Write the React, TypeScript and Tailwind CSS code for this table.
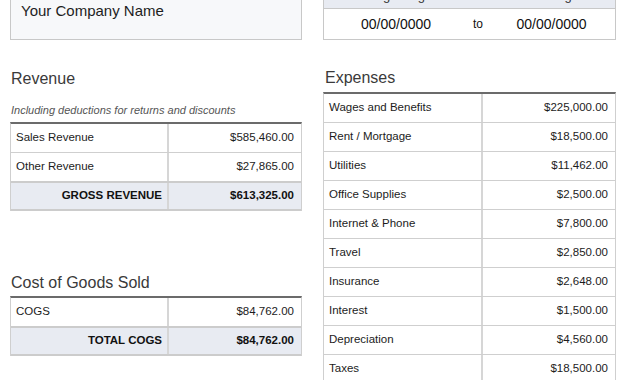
import React from "react";

const font = { fontFamily: '"Liberation Sans", Arial, sans-serif' };

type Row = { label: string; amount: string };

const revenue: Row[] = [
  { label: "Sales Revenue", amount: "$585,460.00" },
  { label: "Other Revenue", amount: "$27,865.00" },
];

const cogs: Row[] = [{ label: "COGS", amount: "$84,762.00" }];

const expenses: Row[] = [
  { label: "Wages and Benefits", amount: "$225,000.00" },
  { label: "Rent / Mortgage", amount: "$18,500.00" },
  { label: "Utilities", amount: "$11,462.00" },
  { label: "Office Supplies", amount: "$2,500.00" },
  { label: "Internet & Phone", amount: "$7,800.00" },
  { label: "Travel", amount: "$2,850.00" },
  { label: "Insurance", amount: "$2,648.00" },
  { label: "Interest", amount: "$1,500.00" },
  { label: "Depreciation", amount: "$4,560.00" },
  { label: "Taxes", amount: "$18,500.00" },
];

function LineRow({ row, first }: { row: Row; first: number }) {
  return (
    <div
      className="grid h-[29px] border-b border-[#cfcfcf] text-[11.5px] text-[#1c1c1c]"
      style={{ gridTemplateColumns: `${first}px 1fr` }}
    >
      <div className="flex items-center border-r-2 border-[#d6d6d6] pl-[5px]">{row.label}</div>
      <div className="flex items-center justify-end pr-[7px]">{row.amount}</div>
    </div>
  );
}

function TotalRow({ label, amount, first }: { label: string; amount: string; first: number }) {
  return (
    <div
      className="-mt-px grid h-[30px] border-y-2 border-[#cccccc] bg-[#e8ebf2] text-[11.5px] font-bold text-[#111]"
      style={{ gridTemplateColumns: `${first}px 1fr` }}
    >
      <div className="flex items-center justify-end border-r-2 border-[#d6d6d6] pr-[5px]">{label}</div>
      <div className="flex items-center justify-end pr-[7px]">{amount}</div>
    </div>
  );
}

function Table({ children }: { children: React.ReactNode }) {
  return <div className="border-x border-t-2 border-x-[#cfcfcf] border-t-[#6b6b6b]">{children}</div>;
}

export default function App() {
  return (
    <div className="h-[380px] w-[630px] overflow-hidden bg-white" style={font}>
      <div className="flex gap-[21px] pl-[10px]">
        {/* Left column */}
        <div className="flex w-[292px] flex-col">
          <div className="h-[40px] border-x border-b border-[#c8c8c8] bg-[#f7f8fa] pl-[10px] pt-[2px] text-[15px] leading-[18px] text-[#1e1e1e]">
            Your Company Name
          </div>
          <div className="mt-[29px] pl-[1px] text-[16px] leading-[20px] text-[#3a3a3a]">Revenue</div>
          <div className="mt-[14px] pl-[1px] text-[11px] italic leading-[14px] text-[#555]">
            Including deductions for returns and discounts
          </div>
          <div className="mt-[5px]">
            <Table>
              {revenue.map((r) => (
                <LineRow key={r.label} row={r} first={158} />
              ))}
              <TotalRow label="GROSS REVENUE" amount="$613,325.00" first={158} />
            </Table>
          </div>
          <div className="mt-[62px] pl-[1px] text-[16px] leading-[20px] text-[#3a3a3a]">Cost of Goods Sold</div>
          <div className="mt-[3px]">
            <Table>
              {cogs.map((r) => (
                <LineRow key={r.label} row={r} first={158} />
              ))}
              <TotalRow label="TOTAL COGS" amount="$84,762.00" first={158} />
            </Table>
          </div>
        </div>

        {/* Right column */}
        <div className="flex w-[293px] flex-col">
          <div className="h-[40px] border-x border-b border-[#c8c8c8]">
            <div className="grid h-[9px] grid-cols-[144px_20px_1fr] overflow-hidden border-b border-[#c8c8c8] bg-[#e8ebf2] text-[13px] leading-[16px] text-[#333]">
              <div className="-mt-[12px] text-center">Beginning</div>
              <div />
              <div className="-mt-[12px] text-center">Ending</div>
            </div>
            <div className="grid h-[30px] grid-cols-[144px_20px_1fr] items-center text-[14px] text-[#111]">
              <div className="text-center">00/00/0000</div>
              <div className="text-center text-[12px]">to</div>
              <div className="text-center">00/00/0000</div>
            </div>
          </div>
          <div className="mt-[28px] pl-[2px] text-[16px] leading-[20px] text-[#3a3a3a]">Expenses</div>
          <div className="mt-[4px]">
            <Table>
              {expenses.map((r) => (
                <LineRow key={r.label} row={r} first={159} />
              ))}
            </Table>
          </div>
        </div>
      </div>
    </div>
  );
}
